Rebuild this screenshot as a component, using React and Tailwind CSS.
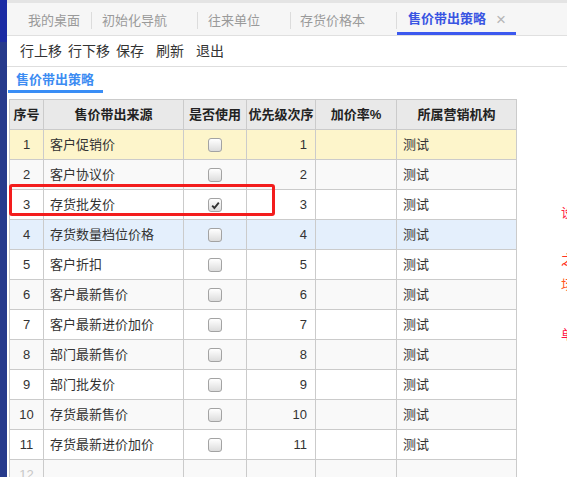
import React from 'react';

const tabs = [
  { label: '我的桌面', w: 'w-[85px]', pl: 'pl-[21px]' },
  { label: '初始化导航', w: 'w-[106px]', pl: 'pl-[10px]' },
  { label: '往来单位', w: 'w-[93px]', pl: 'pl-[10px]' },
  { label: '存货价格本', w: 'w-[106px]', pl: 'pl-[9px]' },
];

const tools = [
  { label: '行上移', w: 'w-[48px]' },
  { label: '行下移', w: 'w-[48px]' },
  { label: '保存', w: 'w-[40px]' },
  { label: '刷新', w: 'w-[40px]' },
  { label: '退出', w: 'w-[40px]' },
];

const rows = [
  { no: 1, name: '客户促销价', bg: 'bg-[#fdf5cb]' },
  { no: 2, name: '客户协议价', bg: 'bg-[#f9f9f9]' },
  { no: 3, name: '存货批发价', bg: 'bg-white', checked: true },
  { no: 4, name: '存货数量档位价格', bg: 'bg-[#e4effc]' },
  { no: 5, name: '客户折扣', bg: 'bg-white' },
  { no: 6, name: '客户最新售价', bg: 'bg-[#f9f9f9]' },
  { no: 7, name: '客户最新进价加价', bg: 'bg-white' },
  { no: 8, name: '部门最新售价', bg: 'bg-[#f9f9f9]' },
  { no: 9, name: '部门批发价', bg: 'bg-white' },
  { no: 10, name: '存货最新售价', bg: 'bg-[#f9f9f9]' },
  { no: 11, name: '存货最新进价加价', bg: 'bg-white' },
];

function Checkbox({ checked }) {
  return (
    <span className="inline-flex items-center justify-center w-[14px] h-[14px] rounded-[3px] border border-[#a3a3a3] bg-[linear-gradient(#ffffff,#dcdcdc)] align-middle">
      {checked && (
        <svg width="9" height="9" viewBox="0 0 9 9">
          <path d="M1.2 4.6 L3.4 7 L7.8 1.6" fill="none" stroke="#333" strokeWidth="1.9" />
        </svg>
      )}
    </span>
  );
}

const cell = 'border border-[#cbcbcb] h-[30px] p-0';

export default function App() {
  return (
    <div className="relative w-[567px] h-[477px] overflow-hidden flex bg-white text-[13px] text-[#333] font-['Liberation_Sans','Noto_Sans_CJK_SC',sans-serif]">
      {/* left side strip */}
      <div className="w-[7px] shrink-0 flex flex-col">
        <div className="h-[42px] shrink-0 bg-[#1b2ba4]" />
        <div className="flex-1 bg-[#263a8c]" />
      </div>

      <div className="flex-1 flex flex-col">
        {/* tabs */}
        <div className="h-[3px] shrink-0 bg-[#e4e4e4]" />
        <div className="h-[33px] shrink-0 flex items-stretch bg-[#f6f6f6] border-b border-[#e0e0e0]">
          {tabs.map((t) => (
            <div key={t.label} className={`${t.w} ${t.pl} pt-[3px] flex items-center justify-between text-[#9a9a9a]`}>
              <span>{t.label}</span>
              <span className="w-px h-[17px] bg-[#dcdcdc]" />
            </div>
          ))}
          <div className="w-[119px] pl-[11px] pr-[10px] flex items-center justify-between border-b-[3px] border-[#3c59ef] pt-[3px]">
            <span className="font-bold text-[#3a55e2]">售价带出策略</span>
            <span className="text-[#b5b5b5] text-[17px] leading-none">×</span>
          </div>
        </div>

        {/* toolbar */}
        <div className="h-[31px] shrink-0 flex items-center pl-[13px] border-b border-[#dedede] text-[14px] text-[#333]">
          {tools.map((t) => (
            <span key={t.label} className={t.w}>{t.label}</span>
          ))}
        </div>

        {/* sub tab */}
        <div className="pl-[1px] mt-[2px] shrink-0">
          <div className="w-[95px] h-[24px] pl-[8px] flex items-center border-b-[3px] border-[#3a8ef6] font-bold text-[#3d8cf2]">
            售价带出策略
          </div>
        </div>

        {/* table */}
        <div className="relative shrink-0 ml-[2px] mt-[6px] w-[507px]">
          <table className="w-[507px] table-fixed border-collapse">
            <colgroup>
              <col className="w-[34px]" />
              <col className="w-[140px]" />
              <col className="w-[63px]" />
              <col className="w-[69px]" />
              <col className="w-[81px]" />
              <col className="w-[120px]" />
            </colgroup>
            <thead>
              <tr className="bg-[#e9e9e9] font-bold text-[#222]">
                <th className={cell}>序号</th>
                <th className={cell}>售价带出来源</th>
                <th className={cell}>是否使用</th>
                <th className={cell}>优先级次序</th>
                <th className={cell}>加价率%</th>
                <th className={cell}>所属营销机构</th>
              </tr>
            </thead>
            <tbody>
              {rows.map((r) => (
                <tr key={r.no} className={r.bg}>
                  <td className={`${cell} text-center`}>{r.no}</td>
                  <td className={`${cell} pl-[6px]`}>{r.name}</td>
                  <td className={`${cell} text-center`}><Checkbox checked={r.checked} /></td>
                  <td className={`${cell} text-right pr-[8px]`}>{r.no}</td>
                  <td className={cell}></td>
                  <td className={`${cell} pl-[6px]`}>测试</td>
                </tr>
              ))}
              <tr className="bg-[#f9f9f9]">
                <td className={`${cell} text-center text-[#c8c8c8]`}>12</td>
                <td className={cell}></td>
                <td className={cell}></td>
                <td className={cell}></td>
                <td className={cell}></td>
                <td className={cell}></td>
              </tr>
            </tbody>
          </table>
          {/* highlight box */}
          <div className="absolute left-0 top-[85px] w-[266px] h-[32px] border-[3px] border-[#f31d1d] rounded-[3px]" />
        </div>
      </div>

      {/* clipped red notes on the right edge, as in the reference */}
      <span className="absolute left-[561px] top-[203px] text-[#ff2244]">设</span>
      <span className="absolute left-[561px] top-[250px] text-[#ff3322]">之</span>
      <span className="absolute left-[561px] top-[275px] text-[#ff5522]">场</span>
      <span className="absolute left-[561px] top-[325px] text-[#ff1144]">单</span>
    </div>
  );
}
